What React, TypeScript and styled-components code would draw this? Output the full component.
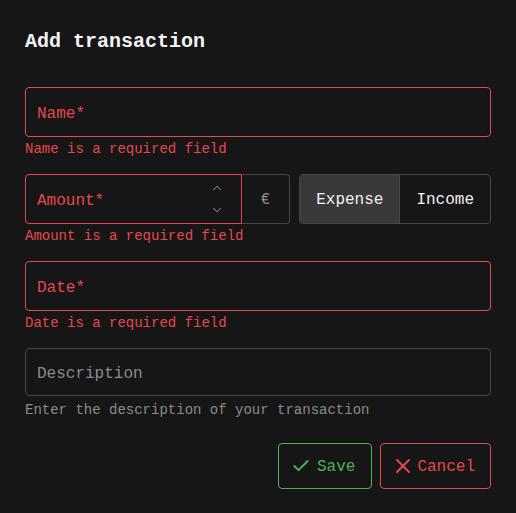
import React from "react";
import styled, { createGlobalStyle } from "styled-components";
import { ChevronUp, ChevronDown, Check, X } from "lucide-react";

const RED = "#e5484d";
const GREEN = "#4fb05a";
const BORDER = "#474747";
const MUTED = "#8b8b8b";

const Global = createGlobalStyle`
  html, body { margin: 0; padding: 0; background: #161616; }
  body { font-family: "Liberation Mono", "DejaVu Sans Mono", monospace; color: #f2f2f2; }
  * { box-sizing: border-box; }
`;

const Dialog = styled.div`
  width: 516px;
  height: 513px;
  background: #161616;
  padding: 30px 25px 24px;
  display: flex;
  flex-direction: column;
`;

const Title = styled.h2`
  margin: 0 0 33px;
  font-size: 20px;
  line-height: 24px;
  font-weight: 700;
  color: #f4f4f4;
`;

const Group = styled.div`
  display: flex;
  flex-direction: column;
  margin-bottom: 16px;
`;

const Field = styled.div<{ $error?: boolean; $h?: number; $flat?: boolean; $grow?: boolean }>`
  height: ${(p) => p.$h ?? 50}px;
  flex: ${(p) => (p.$grow ? "1 1 auto" : "none")};
  border: 1px solid ${(p) => (p.$error ? RED : BORDER)};
  border-radius: ${(p) => (p.$flat ? "4px 0 0 4px" : "4px")};
  display: flex;
  align-items: center;
  padding: 3px 12px 0 11px;
  font-size: 16px;
  color: ${(p) => (p.$error ? RED : MUTED)};
`;

const Helper = styled.div<{ $error?: boolean; $pt?: number }>`
  padding-top: ${(p) => p.$pt ?? 3}px;
  font-size: 14px;
  line-height: 18px;
  color: ${(p) => (p.$error ? RED : MUTED)};
`;

const Row = styled.div`
  display: flex;
  align-items: stretch;
  height: 50px;
  gap: 9px;
`;

const AmountGroup = styled.div`
  flex: 1;
  display: flex;
`;

const Label = styled.span`
  flex: 1;
`;

const Spinner = styled.div`
  display: flex;
  flex-direction: column;
  align-items: center;
  gap: 8px;
  color: ${MUTED};
  margin: -3px 5px 0 0;
`;

const Adornment = styled.div`
  width: 48px;
  border: 1px solid ${BORDER};
  border-left: none;
  border-radius: 0 4px 4px 0;
  display: flex;
  align-items: center;
  justify-content: center;
  padding-top: 1px;
  color: ${MUTED};
  font-size: 16px;
`;

const Toggle = styled.div`
  display: flex;
  border: 1px solid ${BORDER};
  border-radius: 4px;
  overflow: hidden;
`;

const ToggleBtn = styled.div<{ $active?: boolean }>`
  display: flex;
  align-items: center;
  padding: 2px 16px 0;
  font-size: 16px;
  color: #f2f2f2;
  background: ${(p) => (p.$active ? "#393939" : "transparent")};
  & + & { border-left: 1px solid ${BORDER}; }
`;

const Actions = styled.div`
  display: flex;
  justify-content: flex-end;
  gap: 8px;
  margin-top: 8px;
`;

const Btn = styled.button<{ $color: string; $pl: number; $pr: number; $gap: number }>`
  height: 46px;
  display: flex;
  align-items: center;
  gap: ${(p) => p.$gap}px;
  padding: 1px ${(p) => p.$pr}px 0 ${(p) => p.$pl}px;
  background: transparent;
  border: 1px solid ${(p) => p.$color};
  border-radius: 4px;
  color: ${(p) => p.$color};
  font-family: inherit;
  font-size: 16px;
  svg { margin-top: -1px; }
`;

export default function App() {
  return (
    <>
      <Global />
      <Dialog>
        <Title>Add transaction</Title>
        <Group>
          <Field $error>Name*</Field>
          <Helper $error>Name is a required field</Helper>
        </Group>
        <Group>
          <Row>
            <AmountGroup>
              <Field $error $flat $grow>
                <Label>Amount*</Label>
                <Spinner>
                  <ChevronUp size={14} strokeWidth={1.75} />
                  <ChevronDown size={14} strokeWidth={1.75} />
                </Spinner>
              </Field>
              <Adornment>€</Adornment>
            </AmountGroup>
            <Toggle>
              <ToggleBtn $active>Expense</ToggleBtn>
              <ToggleBtn>Income</ToggleBtn>
            </Toggle>
          </Row>
          <Helper $error>Amount is a required field</Helper>
        </Group>
        <Group>
          <Field $error>Date*</Field>
          <Helper $error>Date is a required field</Helper>
        </Group>
        <Group>
          <Field $h={48}>Description</Field>
          <Helper $pt={5}>Enter the description of your transaction</Helper>
        </Group>
        <Actions>
          <Btn $color={GREEN} $pl={12} $pr={16} $gap={6}>
            <Check size={20} strokeWidth={2.25} />
            Save
          </Btn>
          <Btn $color={RED} $pl={10} $pr={15} $gap={2}>
            <X size={24} strokeWidth={2} />
            Cancel
          </Btn>
        </Actions>
      </Dialog>
    </>
  );
}
